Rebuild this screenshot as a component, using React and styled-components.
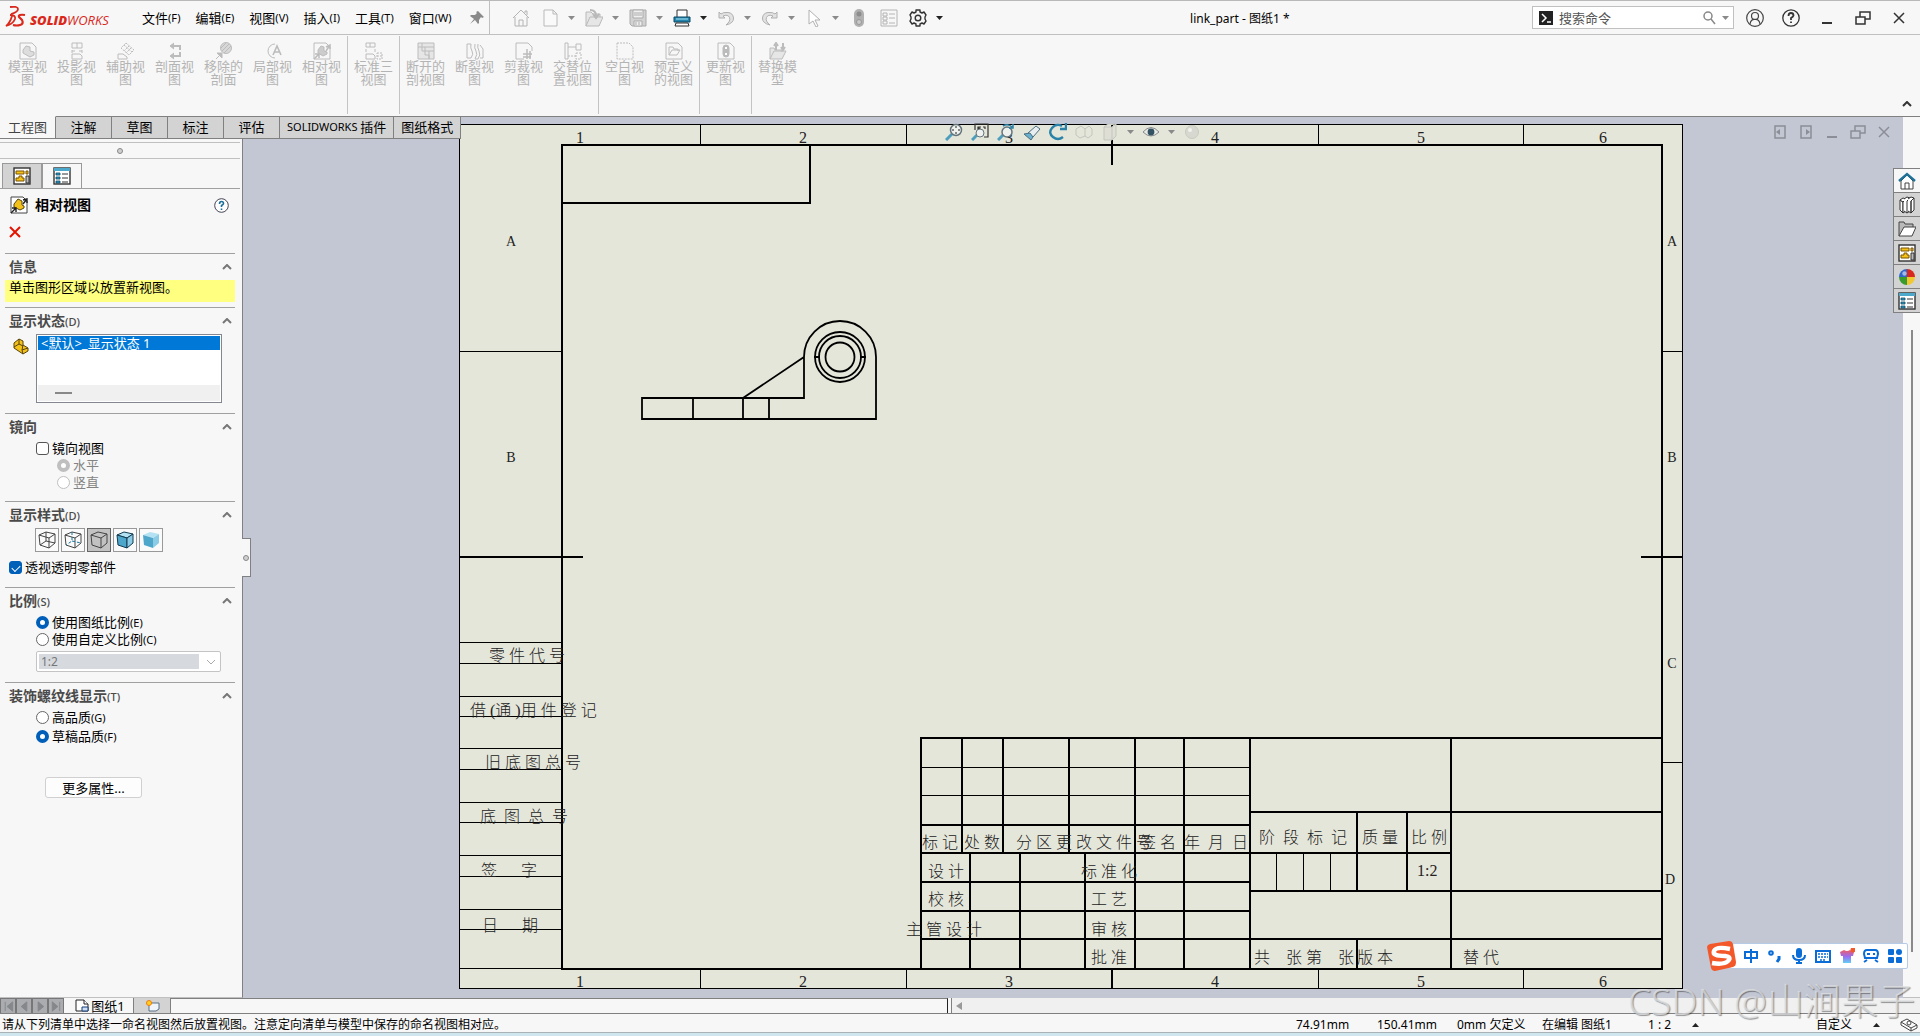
import React, { useState } from "react";
import styled, { createGlobalStyle, css } from "styled-components";

const menus = [
  ["文件", "F"],
  ["编辑", "E"],
  ["视图", "V"],
  ["插入", "I"],
  ["工具", "T"],
  ["窗口", "W"],
];

const quickTools = [
  { icon: "home", label: "欢迎" },
  { icon: "newDoc", label: "新建", split: true },
  { icon: "open", label: "打开", split: true },
  { icon: "save", label: "保存", split: true },
  { icon: "print", label: "打印", split: true, active: true },
  { icon: "undo", label: "撤消", split: true },
  { icon: "redo", label: "重做", split: true },
  { icon: "cursor", label: "选择", split: true },
  { icon: "light", label: "重建模型" },
  { icon: "list", label: "文件属性" },
  { icon: "gear", label: "选项", split: true, active: true },
];

const ribbonGroups = [
  [
    ["模型视", "图", "rModel"],
    ["投影视", "图", "rProject"],
    ["辅助视", "图", "rAux"],
    ["剖面视", "图", "rSection"],
    ["移除的", "剖面", "rRemoved"],
    ["局部视", "图", "rDetail"],
    ["相对视", "图", "rRelative"],
  ],
  [["标准三", "视图", "rThree"]],
  [
    ["断开的", "剖视图", "rBroken"],
    ["断裂视", "图", "rBreak"],
    ["剪裁视", "图", "rCrop"],
    ["交替位", "置视图", "rAlt"],
  ],
  [
    ["空白视", "图", "rEmpty"],
    ["预定义", "的视图", "rPredef"],
  ],
  [["更新视", "图", "rUpdate"]],
  [["替换模", "型", "rReplace"]],
];

const commandTabs = [
  ["", "工程图"],
  ["", "注解"],
  ["", "草图"],
  ["", "标注"],
  ["", "评估"],
  ["SOLIDWORKS", " 插件"],
  ["", "图纸格式"],
];

const cubeStyles = ["wire", "hidden", "removed", "edges", "shaded"];

const sheetTexts = [
  // left margin column
  [489, 661, "零 件 代 号"],
  [470, 716, "借 (通 )用 件 登 记"],
  [485, 768, "旧 底 图 总 号"],
  [480, 822, "底  图  总  号"],
  [481, 876, "签      字"],
  [482, 931, "日      期"],
  // title block
  [922, 848, "标 记"],
  [964, 848, "处 数"],
  [1016, 848, "分 区 更 改 文 件 号"],
  [1140, 848, "签 名"],
  [1184, 848, "年  月  日"],
  [1259, 843, "阶  段  标  记"],
  [1362, 843, "质 量"],
  [1411, 843, "比 例"],
  [1417, 876, "1:2"],
  [928, 877, "设 计"],
  [928, 905, "校 核"],
  [906, 935, "主 管 设 计"],
  [1081, 877, "标 准 化"],
  [1091, 905, "工 艺"],
  [1091, 935, "审 核"],
  [1091, 963, "批 准"],
  [1254, 963, "共    张 第    张"],
  [1357, 963, "版 本"],
  [1463, 963, "替 代"],
];

const zoneTexts = [
  [580, "1"],
  [803, "2"],
  [1009, "3"],
  [1215, "4"],
  [1421, "5"],
  [1603, "6"],
];

const zoneLetters = [
  [511, 246, "A"],
  [511, 462, "B"],
  [1672, 246, "A"],
  [1672, 462, "B"],
  [1672, 668, "C"],
  [1670, 884, "D"],
];

const Part = () => (
  <g stroke="#5a430a" strokeWidth="1" strokeLinejoin="round">
    <path d="M1 6l5-4 4 2v4l5 3v3l-5 3-9-6z" fill="#f2c21a" />
    <path d="M6 2v5l-5 3M6 7l4 2M10 8l-1 5 6-2M9 13l1 4" fill="none" />
  </g>
);

const Cube = ({ kind }) => {
  if (kind === "shaded" || kind === "edges") {
    const line = kind === "edges" ? "#123a50" : "none";
    return (
      <g stroke={line} strokeLinejoin="round">
        <path d="M1 4l7-3 9 2-6 4z" fill="#b5e2f3" />
        <path d="M1 4l10 3v10L2 14z" fill="#4fa6cb" />
        <path d="M11 7l6-4v9l-6 5z" fill="#8ccbe6" />
      </g>
    );
  }
  return (
    <g fill="none" stroke="#444" strokeLinejoin="round">
      <path d="M1 4l7-3 9 2-6 4zM1 4l1 10 9 3 6-5V3M11 7v10" />
      {kind === "wire" && <path d="M8 1v9l-6 4M8 10l9 2" />}
      {kind === "hidden" && (
        <path d="M8 1v9l-6 4M8 10l9 2" stroke="#17759d" strokeDasharray="3 2" />
      )}
    </g>
  );
};

// every drawing sits on an 18 x 18 grid
const shapes = {
  home: (
    <path d="M1 9l8-8 8 8M3 8v9h12V8M7 17v-6h4v6M13 4V2h2v4" fill="none" stroke="#b4b4b4" />
  ),
  newDoc: <path d="M3 1h9l4 4v12H3zM12 1v4h4" fill="#fafafa" stroke="#b9b9b9" />,
  open: (
    <g stroke="#b9b9b9" fill="#e6e6e6">
      <path d="M1 17V3h5l2 2h7v4" />
      <path d="M1 17l4-9h13l-4 9z" />
      <path d="M5 1q6 0 6 6M8 5l3 4 3-4" fill="none" strokeWidth="2" />
    </g>
  ),
  save: (
    <g fill="#d2d2d2" stroke="#ababab">
      <path d="M1 1h16v16H3l-2-2z" />
      <path d="M4 1h10v8H4zM5 12h8v5H5z" fill="#f0f0f0" />
      <path d="M5 4h8M5 6h8M7 13v3M10 13v3" />
    </g>
  ),
  print: (
    <g stroke="#333">
      <path d="M4 1h10v8H4z" fill="#fff" />
      <path d="M1 8h16v5H1z" fill="#2687ae" stroke="#0c4763" />
      <path d="M3 14h12l1 3H2z" fill="#fff" />
      <path d="M3 10h12" stroke="#a9e4f7" />
    </g>
  ),
  undo: (
    <path d="M2 3v6h6L6 7q5-2 6.500 1.500T9 16q8-2 7.500-7T11 3.500 4 5z" fill="#e2e2e2" stroke="#b0b0b0" />
  ),
  redo: (
    <path d="M16 3v6h-6l2-2Q7 5 5.500 8.500T9 16q-8-2-7.500-7T7 3.500 14 5z" fill="#e2e2e2" stroke="#b0b0b0" />
  ),
  cursor: <path d="M4 1v14l4-3 3 6 2-1-3-6h5z" fill="#fff" stroke="#b0b0b0" />,
  light: (
    <g>
      <rect x="4" y="0" width="10" height="18" rx="5" fill="#b0b0b0" />
      <circle cx="9" cy="5" r="2.500" fill="#8d8d8d" />
      <circle cx="9" cy="13" r="2.500" fill="#c9c9c9" stroke="#989898" />
    </g>
  ),
  list: (
    <g fill="none" stroke="#b4b4b4">
      <path d="M1 1h16v16H1zM3 4h4v3H3zM3 8h4v3H3zM3 12h4v3H3zM9 5h6M9 9h6M9 14h6" />
    </g>
  ),
  gear: (
    <g fill="none" stroke="#333" strokeWidth="1.400">
      <path d="M7 1h4v2l2 1 2-1 2 3-1 2v2l1 2-2 3-2-1-2 1v2H7v-2l-2-1-2 1-2-3 1-2V8L1 6l2-3 2 1 2-1z" strokeLinejoin="round" />
      <circle cx="9" cy="9" r="2.800" />
    </g>
  ),
  rModel: (
    <g>
      <path d="M1 1h12l4 4v12H1z" />
      <path d="M4 8l3-4 4 1v4l4 1v3l-4 2-7-4z" fill="#ddd" />
    </g>
  ),
  rProject: (
    <path d="M4 1h10v5H4zM9 1v5M4 8v3M14 8v3M4 9h3M11 9h3M4 12h8l2 2v3H4z" />
  ),
  rAux: (
    <g>
      <path d="M9 1l8 7-5 5-8-7zM7 3l8 7M12 4L7 9M14 6l-5 5" strokeDasharray="2 1" />
      <path d="M1 12h5l4 3v2H1z" />
    </g>
  ),
  rSection: (
    <g strokeWidth="2">
      <path d="M8 1L4 4l4 3M8 11l-4 3 4 3" fill="#bcbcbc" strokeWidth="1" />
      <path d="M5 4h9v4M14 10v4H5" />
    </g>
  ),
  rRemoved: (
    <g>
      <circle cx="11" cy="6" r="5.500" fill="#d8d8d8" />
      <path d="M7 9l7-7M9 11l7-7M6 6l5-5" />
      <path d="M1 17l5-5M2 11h5v5z" fill="#bcbcbc" />
    </g>
  ),
  rDetail: (
    <g>
      <path d="M11 2a7 7 0 1 0 0 14" />
      <path d="M9 13l4-9 4 9M10 10h6" strokeWidth="1.600" />
    </g>
  ),
  rRelative: (
    <g>
      <path d="M1 1h12l4 4v12H1z" />
      <path d="M5 8l3-4 3 1v4l3 1v2l-4 2-5-3z" fill="#ccc" />
      <path d="M1 17l5-5M2 12h4v4M13 9l4-6M13 5l4-2v4" strokeWidth="1.500" />
    </g>
  ),
  rThree: (
    <g>
      <path d="M1 1h9v4H1zM5 1v4M1 7v3M10 7v3M1 12h7l2 2v3H1z" />
      <path d="M12 11h5v6h-5zM12 14h5" strokeDasharray="2 1" />
    </g>
  ),
  rBroken: (
    <g>
      <path d="M1 1h16v16H1z" fill="#e6e6e6" />
      <path d="M1 5h4v4h3v4h4v4M5 1v4h12M8 5v4h9M12 9v8" />
    </g>
  ),
  rBreak: (
    <path d="M5 2H1v14h4q3-4 1-7t-1-7M9 2q-1 4 1 7t-1 8h3q3-4 1-8t-1-7M14 3l3 4v9h-3" />
  ),
  rCrop: (
    <g>
      <path d="M1 1h12l4 4v4M1 1v16h8" />
      <path d="M8 12h9M12 7v10M15 9v8M8 15h8" strokeWidth="1.500" />
    </g>
  ),
  rAlt: (
    <g>
      <path d="M1 1h3v16H1zM4 5h8M12 2h5v6h-5z" />
      <path d="M4 14h8M12 11h5v6h-5z" strokeDasharray="2 1" />
    </g>
  ),
  rEmpty: <path d="M1 1h12l4 4v12H1z" strokeDasharray="2 1" />,
  rPredef: (
    <g>
      <path d="M1 1h12l4 4v12H1z" />
      <path d="M4 13V5h4l1 2h4v2M4 13l3-5h8l-3 5z" />
    </g>
  ),
  rUpdate: (
    <g>
      <path d="M1 1h12l4 4v12H1z" />
      <rect x="6" y="3" width="6" height="12" rx="3" fill="#bbb" />
      <path d="M8 6h2M8 12h2" stroke="#fff" strokeWidth="2" />
    </g>
  ),
  rReplace: (
    <g>
      <path d="M1 17V6h4l1 2h7v2M1 17l4-8h12l-4 8z" fill="#e6e6e6" />
      <path d="M7 8V3M5 4l2-3 2 3M14 1v7M12 5l2 3 2-3" strokeWidth="2" />
    </g>
  ),
  sheetFmt: (
    <g stroke="#333">
      <rect x="1" y="1" width="16" height="16" fill="#fff" strokeWidth="1.400" />
      <path d="M3 4h8v3H3zM13 4h2v3h-2zM3 14v-3h3V9h3v2h2v3z" fill="#f5c21a" stroke="#7a5300" />
      <path d="M13 9h3v7h-3z" fill="#bbb" />
    </g>
  ),
  props: (
    <g>
      <rect x="1" y="1" width="16" height="16" fill="#fff" stroke="#333" strokeWidth="1.400" />
      <path d="M1 1h16v3H1z" fill="#4da9cc" />
      <path d="M3 6h4v2H3zM3 10h4v2H3zM3 14h4v2H3z" fill="#3b9cc0" stroke="#0b4866" strokeWidth=".8" />
      <path d="M9 7h6M9 11h6M9 15h6" stroke="#333" />
    </g>
  ),
  relView: (
    <g>
      <path d="M1 1h12l4 4v12H1z" fill="#fff" stroke="#444" />
      <path d="M4 8l4-5 4 2v4l2 1v2l-4 2-6-3z" fill="#f2c21a" stroke="#5a430a" />
      <path d="M1 17l5-5M2 12h4v4M13 8l4-5M13 4l4-1v4" fill="none" stroke="#222" strokeWidth="1.400" />
    </g>
  ),
  part: <Part />,
  taskHome: (
    <g>
      <path d="M3 9v8h12V9L9 3z" fill="#fff" stroke="#444" />
      <path d="M7 17v-6h4v6" fill="none" stroke="#444" />
      <path d="M1 9l8-7 8 7" fill="none" stroke="#1f7197" strokeWidth="2.400" />
    </g>
  ),
  books: (
    <g fill="#fff" stroke="#333" strokeLinejoin="round">
      <path d="M2 4l3 2v11l-3-3z" />
      <path d="M2 4l3-2 3 1-3 3zM5 6l3-3v12l-3 2z" />
      <path d="M6 3l3-2 3 1-3 3v12l-3-2M9 5l3-3v13l-3 2" />
      <path d="M10 3l3-2 3 1-3 3v12l-3-2M13 5l3-3v12l-3 3z" />
    </g>
  ),
  folder: (
    <g stroke="#444">
      <path d="M1 16V2h5l1 2h8v3" fill="#b9b9b9" />
      <path d="M1 16L6 7h12l-4 9z" fill="#fff" />
    </g>
  ),
  ball: (
    <g>
      <path d="M9 9V1a8 8 0 0 1 8 8z" fill="#d8271c" />
      <path d="M9 9h8a8 8 0 0 1-8 8z" fill="#f2c832" />
      <path d="M9 9v8a8 8 0 0 1-8-8z" fill="#3a9a2e" />
      <path d="M9 9H1a8 8 0 0 1 8-8z" fill="#2f66c9" />
      <circle cx="6.500" cy="5.500" r="2.200" fill="#fff" opacity=".55" />
    </g>
  ),
  zoomFit: (
    <g>
      <path d="M1 17l6-6" stroke="#4d9dbd" strokeWidth="3" />
      <circle cx="11" cy="7" r="5.500" fill="#eef1ee" stroke="#66757c" strokeWidth="1.500" />
      <path d="M11 3v2M11 9v2M7 7h2M13 7h2" stroke="#222" />
    </g>
  ),
  zoomArea: (
    <g>
      <path d="M4 7V1h13v13h-4M7 4l3 3M7 7V4h3M12 4h2v2" fill="none" stroke="#333" strokeWidth="1.200" />
      <path d="M1 17l5-5" stroke="#4d9dbd" strokeWidth="3" />
      <circle cx="9" cy="10" r="4" fill="#eef1ee" stroke="#66757c" />
    </g>
  ),
  zoomPrev: (
    <g>
      <path d="M1 17l6-6" stroke="#4d9dbd" strokeWidth="3" />
      <circle cx="10" cy="9" r="5" fill="#eef1ee" stroke="#66757c" strokeWidth="1.500" />
      <path d="M6 3q5-3 9 1M16 1v4h-4" fill="none" stroke="#2b7fa3" strokeWidth="1.500" />
    </g>
  ),
  pen: (
    <g stroke="#4b6f80">
      <path d="M5 10l8-7 4 3-7 8z" fill="#e8eef0" />
      <path d="M1 11l6-1 3 4-2 3z" fill="#69b1cd" />
    </g>
  ),
  rotate: (
    <path d="M14 14q-5 4-10 0T3 5q4-5 10-2M11 6h6V0" fill="none" stroke="#2b82a8" strokeWidth="2.400" />
  ),
  ghost: (
    <g fill="none" stroke="#c3c5be">
      <path d="M1 6l5-3 4 3v7l-5 2-4-3zM10 6l4-3 3 3v6l-4 3-3-2" />
    </g>
  ),
  ghostBox: <path d="M3 4l4-3h8v12l-4 4H3zM3 4h8l4-3M11 4v13" fill="#deded4" stroke="#c3c5be" />,
  eye: (
    <g>
      <path d="M1 9q8-9 16 0-8 8-16 0z" fill="#e8eae6" stroke="#85898a" />
      <circle cx="9" cy="9" r="3.400" fill="#335261" />
    </g>
  ),
  ghostBall: (
    <g>
      <circle cx="9" cy="9" r="6.500" fill="#d7d8cf" stroke="#c9cac0" />
      <circle cx="7" cy="7" r="2" fill="#f3f3ee" />
    </g>
  ),
};

const Icon = ({ name }) => {
  const ribbon = /^r[A-Z]/.test(name);
  return (
    <svg
      width="18"
      height="18"
      viewBox="0 0 18 18"
      fill={ribbon ? "none" : undefined}
      stroke={ribbon ? "#bcbcbc" : undefined}
      aria-hidden="true"
    >
      {shapes[name]}
    </svg>
  );
};

const Caret = ({ up, dark }) => (
  <svg width="7" height="4" viewBox="0 0 7 4" aria-hidden="true">
    <path d={up ? "M0 4h7L3.500 0z" : "M0 0h7L3.500 4z"} fill={dark ? "#222" : "#8a8a8a"} />
  </svg>
);

const WindowGlyph = ({ kind }) => (
  <svg width="16" height="16" viewBox="0 0 16 16" fill="none" stroke="currentColor" strokeWidth="1.500" aria-hidden="true">
    {kind === "left" && (
      <g>
        <path d="M3 2h10v12H3z" />
        <path d="M8 5v6L4 8z" fill="currentColor" stroke="none" />
      </g>
    )}
    {kind === "right" && (
      <g>
        <path d="M3 2h10v12H3z" />
        <path d="M8 5v6l4-3z" fill="currentColor" stroke="none" />
      </g>
    )}
    {kind === "min" && <path d="M3 13h10" strokeWidth="2" />}
    {kind === "restore" && <path d="M1 7h9v7H1zM5 7V2h10v7h-5" />}
    {kind === "close" && <path d="M3 3l10 10M13 3L3 13" />}
  </svg>
);

const DrawingSheet = () => (
  <SheetSvg viewBox="243 117 1660 881" role="img" aria-label="图纸1">
    <rect x="459.500" y="124.500" width="1223" height="864" fill="#e5e6da" stroke="#000" shapeRendering="crispEdges" />
    <g fill="none" stroke="#000" shapeRendering="crispEdges">
      {/* zone ticks and margin table */}
      <path d="M700.500 124v20M906.500 124v20M1318.500 124v20M1523.500 124v20M700.500 970v19M906.500 970v19M1318.500 970v19M1523.500 970v19" />
      <path d="M459 351.500h102M1662 351.500h20M1662 762.500h20" />
      <path d="M459 642.500h102M459 663.500h102M459 696.500h102M459 716.500h102M459 748.500h102M459 769.500h102M459 802.500h102M459 822.500h102M459 855.500h102M459 876.500h102M459 909.500h102M459 929.500h102M459 968.500h102" />
      <path d="M921 767.500h329M921 795.500h329M1276.500 853v38M1303.500 853v38M1330.500 853v38" />
      <g strokeWidth="2">
        <path d="M562 145h1100v824H562zM562 203h248V145M1112 124v41M1112 969v20M459 557h124M1641 557h41" />
        <path d="M921 969V738h741M921 825h329M921 853h530M921 882h329M921 911h329M921 939h741M1250 812h412M1250 891h412" />
        <path d="M962 738v115M1003 738v115M1069 738v115M1135 738v231M1184 738v231M1250 738v231M1451 738v231" />
        <path d="M970 853v116M1020 853v116M1085 853v116M1357 812v79M1357 939v30M1407 812v79" />
      </g>
    </g>
    {/* projected part */}
    <g fill="none" stroke="#000" strokeWidth="1.800">
      <path d="M804 398H642v21h234v-62a36 36 0 0 0-72 0zM693 398v21M743 398v21M769 398v21M743 398l61-41" />
      <circle cx="840" cy="357" r="25" />
      <circle cx="840" cy="357" r="21" />
      <circle cx="840" cy="357" r="14.500" />
      <path d="M814 357h6M860 357h6" />
    </g>
    {zoneTexts.map(([x, t]) => (
      <React.Fragment key={t}>
        <text x={x} y="143" textAnchor="middle">{t}</text>
        <text x={x} y="987" textAnchor="middle">{t}</text>
      </React.Fragment>
    ))}
    {zoneLetters.map(([x, y, t]) => (
      <text key={x + "-" + y} className="zone" x={x} y={y} textAnchor="middle">{t}</text>
    ))}
    {sheetTexts.map(([x, y, t]) => (
      <text key={x + "-" + y} x={x} y={y}>{t}</text>
    ))}
  </SheetSvg>
);

const Section = ({ title, hotkey, children }) => (
  <SectionBox>
    <SectionHead>
      <h3>
        {title}
        {hotkey && <Key>({hotkey})</Key>}
      </h3>
      <PlainButton aria-label={"折叠 " + title}>
        <svg width="10" height="6" viewBox="0 0 10 6" fill="none" stroke="#777" strokeWidth="2">
          <path d="M1 5l4-4 4 4" />
        </svg>
      </PlainButton>
    </SectionHead>
    {children}
  </SectionBox>
);

export default function App() {
  const [mirror, setMirror] = useState(false);
  const [seeThrough, setSeeThrough] = useState(true);
  const [scale, setScale] = useState("sheet");
  const [quality, setQuality] = useState("draft");
  const [cube, setCube] = useState("removed");

  return (
    <AppWindow>
      <GlobalStyle />
      <TitleBar>
        <Logo>
          <svg width="21" height="22" viewBox="0 0 21 22" fill="none" stroke="#da291c" strokeWidth="1.800" aria-hidden="true">
            <path d="M5 1q8-1 8 2T6 8" />
            <path d="M5 9q6 0 5 4-2 5-9 7 4-3 6-10" />
            <path d="M20 9q-7-1-6 2 1 1 3 3 2 4-2 5-3 1-7 0" strokeWidth="2.200" />
          </svg>
          <span>
            <b>SOLID</b>WORKS
          </span>
        </Logo>
        <MenuBar>
          {menus.map(([name, key]) => (
            <PlainButton key={name}>
              {name}
              <Key>({key})</Key>
            </PlainButton>
          ))}
        </MenuBar>
        <PinButton aria-label="固定菜单">
          <svg width="14" height="14" viewBox="0 0 14 14" fill="#8a8a8a">
            <path d="M8 0l6 6-2 1-1-1-2 3v3l-1 1-3-4-5 4 4-5-4-3 1-1h4l2-2-1-1z" />
          </svg>
        </PinButton>
        <QuickBar>
          {quickTools.map((t) => (
            <React.Fragment key={t.icon}>
              <ToolButton $split={t.split} aria-label={t.label}>
                <Icon name={t.icon} />
              </ToolButton>
              {t.split && (
                <CaretButton aria-label={t.label + "选项"}>
                  <Caret dark={t.active} />
                </CaretButton>
              )}
            </React.Fragment>
          ))}
        </QuickBar>
        <DocTitle>link_part - 图纸1 *</DocTitle>
        <SearchBox>
          <svg width="14" height="14" viewBox="0 0 14 14" fill="none" stroke="#fff" aria-hidden="true">
            <rect width="14" height="14" fill="#222" stroke="none" />
            <path d="M3 3l4 4-4 4M8 11h4" strokeWidth="1.500" />
          </svg>
          <input aria-label="搜索命令" placeholder="搜索命令" />
          <svg width="14" height="14" viewBox="0 0 14 14" fill="none" stroke="#888" strokeWidth="1.500" aria-hidden="true">
            <circle cx="6" cy="5" r="4" />
            <path d="M9 8l4 5" />
          </svg>
          <Caret />
        </SearchBox>
        <WindowTools>
          <PlainButton aria-label="登录">
            <svg width="18" height="18" viewBox="0 0 18 18" fill="none" stroke="#444" strokeWidth="1.200">
              <circle cx="9" cy="9" r="8.300" />
              <circle cx="9" cy="7" r="3.500" />
              <path d="M4 15q1-5 5-4.500 4-.5 5 4.500" />
            </svg>
          </PlainButton>
          <PlainButton aria-label="帮助">
            <svg width="18" height="18" viewBox="0 0 18 18" fill="none" stroke="#333" strokeWidth="1.300">
              <circle cx="9" cy="9" r="8.200" />
              <path d="M6.500 7q0-3 2.500-3t2.500 2.500Q11 8 9 9v2M9 12.500v1.500" strokeWidth="1.800" />
            </svg>
          </PlainButton>
          {["min", "restore", "close"].map((k) => (
            <PlainButton key={k} aria-label={k}>
              <WindowGlyph kind={k} />
            </PlainButton>
          ))}
        </WindowTools>
      </TitleBar>

      <Ribbon>
        {ribbonGroups.map((group, i) => (
          <RibbonGroup key={i}>
            {group.map(([a, b, icon]) => (
              <RibbonButton key={icon} disabled>
                <Icon name={icon} />
                <span>{a}</span>
                <span>{b}</span>
              </RibbonButton>
            ))}
          </RibbonGroup>
        ))}
        <CollapseButton aria-label="折叠功能区">
          <svg width="10" height="6" viewBox="0 0 10 6" fill="none" stroke="#333" strokeWidth="2">
            <path d="M1 5l4-4 4 4" />
          </svg>
        </CollapseButton>
      </Ribbon>

      <Workspace>
        <CommandTabs role="tablist">
          {commandTabs.map(([latin, t], i) => (
            <CommandTab key={t} role="tab" aria-selected={i === 0} $active={i === 0}>
              {latin && <Key>{latin}&nbsp;</Key>}
              {t}
            </CommandTab>
          ))}
        </CommandTabs>

        <Panel>
          <PanelGrip>
            <Dot />
          </PanelGrip>
          <PanelTabs>
            <PanelTab aria-label="图纸">
              <Icon name="sheetFmt" />
            </PanelTab>
            <PanelTab $active aria-label="属性">
              <Icon name="props" />
            </PanelTab>
          </PanelTabs>
          <PanelHead>
            <Icon name="relView" />
            <h2>相对视图</h2>
            <PlainButton aria-label="帮助">
              <svg width="15" height="15" viewBox="0 0 15 15" fill="none" stroke="#445">
                <circle cx="7.500" cy="7.500" r="6.800" fill="#fff" />
                <path d="M5.500 6q0-2.500 2-2.500t2 2q0 1-2 2v1.500M7.500 10.500V12" stroke="#1c7098" strokeWidth="1.600" />
              </svg>
            </PlainButton>
          </PanelHead>
          <CancelRow>
            <PlainButton aria-label="取消">
              <svg width="12" height="12" viewBox="0 0 12 12" stroke="#e51400" strokeWidth="2">
                <path d="M1 1l10 10M11 1L1 11" />
              </svg>
            </PlainButton>
          </CancelRow>

          <Section title="信息">
            <Message>单击图形区域以放置新视图。</Message>
          </Section>
          <Section title="显示状态" hotkey="D">
            <StateRow>
              <Icon name="part" />
              <StateList role="listbox" aria-label="显示状态">
                <li role="option" aria-selected="true">&lt;默认&gt;_显示状态 1</li>
                <ListScroll />
              </StateList>
            </StateRow>
          </Section>
          <Section title="镜向">
            <Option $level={1}>
              <Check type="checkbox" checked={mirror} onChange={() => setMirror(!mirror)} />
              镜向视图
            </Option>
            <Option $level={2} $disabled>
              <Radio type="radio" name="mirror" defaultChecked disabled />
              水平
            </Option>
            <Option $level={2} $disabled>
              <Radio type="radio" name="mirror" disabled />
              竖直
            </Option>
          </Section>
          <Section title="显示样式" hotkey="D">
            <CubeRow>
              {cubeStyles.map((k) => (
                <CubeButton key={k} aria-label={k} $on={cube === k} onClick={() => setCube(k)}>
                  <svg width="18" height="18" viewBox="0 0 18 18">
                    <Cube kind={k} />
                  </svg>
                </CubeButton>
              ))}
            </CubeRow>
            <Option $tall>
              <Check type="checkbox" checked={seeThrough} onChange={() => setSeeThrough(!seeThrough)} />
              透视透明零部件
            </Option>
          </Section>
          <Section title="比例" hotkey="S">
            <Option $level={1}>
              <Radio type="radio" name="scale" checked={scale === "sheet"} onChange={() => setScale("sheet")} />
              使用图纸比例<Key>(E)</Key>
            </Option>
            <Option $level={1}>
              <Radio type="radio" name="scale" checked={scale === "custom"} onChange={() => setScale("custom")} />
              使用自定义比例<Key>(C)</Key>
            </Option>
            <ScaleBox>
              <select aria-label="自定义比例" disabled={scale === "sheet"}>
                <option>1:2</option>
              </select>
              <svg width="10" height="6" viewBox="0 0 10 6" fill="none" stroke="#aaa" aria-hidden="true">
                <path d="M1 1l4 4 4-4" />
              </svg>
            </ScaleBox>
          </Section>
          <Section title="装饰螺纹线显示" hotkey="T">
            <Option $level={1}>
              <Radio type="radio" name="quality" checked={quality === "high"} onChange={() => setQuality("high")} />
              高品质<Key>(G)</Key>
            </Option>
            <Option $level={1} $tall>
              <Radio type="radio" name="quality" checked={quality === "draft"} onChange={() => setQuality("draft")} />
              草稿品质<Key>(F)</Key>
            </Option>
          </Section>
          <MoreButton>更多属性...</MoreButton>
        </Panel>

        <Canvas>
          <DrawingSheet />
          <PanelHandle aria-label="隐藏面板">
            <Dot />
          </PanelHandle>
          <HeadsUp>
            {["zoomFit", "zoomArea", "zoomPrev", "pen", "rotate", "ghost", "ghostBox"].map((n) => (
              <PlainButton key={n} aria-label={n}>
                <Icon name={n} />
              </PlainButton>
            ))}
            <Caret />
            <PlainButton aria-label="eye">
              <Icon name="eye" />
            </PlainButton>
            <Caret />
            <PlainButton aria-label="scene">
              <Icon name="ghostBall" />
            </PlainButton>
          </HeadsUp>
          <DocButtons>
            {["left", "right", "min", "restore", "close"].map((k) => (
              <PlainButton key={k} aria-label={k}>
                <WindowGlyph kind={k} />
              </PlainButton>
            ))}
          </DocButtons>
        </Canvas>
        <RightRail>
          <RailThumb />
        </RightRail>
        <TaskPane>
          {["taskHome", "books", "folder", "sheetFmt", "ball", "props"].map((n, i) => (
            <TaskButton key={n} $active={i === 0} aria-label={n}>
              <Icon name={n} />
            </TaskButton>
          ))}
        </TaskPane>
      </Workspace>

      <SheetBar>
        {["M4 2v10M12 2L6 7l6 5z", "M10 2L4 7l6 5z", "M5 2l6 5-6 5z", "M11 2v10M3 2l6 5-6 5z"].map((d) => (
          <NavButton key={d} disabled aria-label="nav">
            <svg width="14" height="13" viewBox="0 0 14 14" fill="#85878a" stroke="#85878a">
              <path d={d} />
            </svg>
          </NavButton>
        ))}
        <SheetTab $active>
          <svg width="14" height="13" viewBox="0 0 14 13" fill="#fff" stroke="#222">
            <path d="M1 1h8l4 4v7H1z" />
            <path d="M7 8h6v4H7z" fill="#cfe0f5" stroke="#143c78" />
            <path d="M9 1v4h4" />
          </svg>
          图纸1
        </SheetTab>
        <SheetTab aria-label="添加图纸">
          <svg width="15" height="13" viewBox="0 0 15 13" fill="#eef4fa" stroke="#5a6f86">
            <path d="M4 4h10v6l-3 2H4z" />
            <circle cx="4" cy="4" r="2.500" fill="#ffd21c" stroke="#f07a12" />
          </svg>
        </SheetTab>
        <SheetFill />
        <HScroll>
          <svg width="6" height="8" viewBox="0 0 6 8" fill="#9a9a9a" aria-hidden="true">
            <path d="M6 0v8L0 4z" />
          </svg>
        </HScroll>
      </SheetBar>

      <StatusBar>
        <Hint>请从下列清单中选择一命名视图然后放置视图。注意定向清单与模型中保存的命名视图相对应。</Hint>
        <Status $w={81}>74.91mm</Status>
        <Status $w={80}>150.41mm</Status>
        <Status $w={85}>0mm 欠定义</Status>
        <Status $w={106}>在编辑 图纸1</Status>
        <Status $w={168}>
          1 : 2 <Caret up dark />
        </Status>
        <Status $w={84}>
          自定义 <Caret up dark />
        </Status>
        <svg width="18" height="14" viewBox="0 0 18 14" fill="#fff" stroke="#444" aria-hidden="true">
          <path d="M1 4l6-3 10 6v3l-6 3L1 7zM1 4l10 6 6-3M11 10v3" />
          <circle cx="9" cy="5" r="2" />
        </svg>
      </StatusBar>
      <Taskbar />

      <Ime>
        <ImeLogo width="32" height="32" viewBox="0 0 32 32" aria-hidden="true">
          <path d="M2 7q0-2 3-3l19-3q3 0 4 3l3 18q0 4-3 5l-18 4q-3 0-4-3z" fill="#f3582a" />
          <path d="M25 9Q11 6 9 11t11 5q7 1 3 5T7 23" fill="none" stroke="#fff" strokeWidth="4.500" />
        </ImeLogo>
        <ImeTools>
          <svg viewBox="0 0 16 16" fill="none" stroke="#0a6cd6" strokeWidth="2">
            <path d="M2 4h12v6H2zM8 1v14" />
          </svg>
          <svg viewBox="0 0 16 16" fill="none" stroke="#0a6cd6" strokeWidth="2">
            <circle cx="4" cy="5" r="1.800" />
            <path d="M12 8v3l-2 3" strokeWidth="3" />
          </svg>
          <svg viewBox="0 0 16 16" fill="none" stroke="#0a6cd6" strokeWidth="2">
            <rect x="6" y="1" width="4" height="8" rx="2" fill="#0a6cd6" />
            <path d="M2 7q0 5 6 5t6-5M8 12v4M5 15h6" />
          </svg>
          <svg viewBox="0 0 16 16" fill="none" stroke="#0a6cd6" strokeWidth="2">
            <path d="M1 3h14v11H1z" />
            <path d="M3 6h10M3 9h10M5 12h6" strokeDasharray="2 1" strokeWidth="1.500" />
          </svg>
          <svg viewBox="0 0 16 16">
            <defs>
              <linearGradient id="shirt" x2="0" y2="1">
                <stop stopColor="#ef5c66" />
                <stop offset=".5" stopColor="#9a6cf0" />
                <stop offset="1" stopColor="#5fd0f5" />
              </linearGradient>
            </defs>
            <path d="M1 4l4-2q3 2 6 0l4 2-1 4h-2v7H4V8H2z" fill="url(#shirt)" />
            <circle cx="14" cy="2" r="2.500" fill="#f3582a" />
          </svg>
          <svg viewBox="0 0 16 16" fill="none" stroke="#0a6cd6" strokeWidth="2">
            <path d="M4 2h8q3 0 3 4l-1 4H2L1 6q0-4 3-4zM4 6h3M10 6h2M4 12l-3 2M12 12l3 2" />
          </svg>
          <svg viewBox="0 0 16 16" fill="#0a6cd6">
            <rect x="1" y="1" width="6" height="6" rx="1" />
            <rect x="9" y="1" width="6" height="6" rx="3" />
            <rect x="1" y="9" width="6" height="6" rx="1" />
            <rect x="9" y="9" width="6" height="6" rx="1" />
          </svg>
        </ImeTools>
      </Ime>
      <Watermark>CSDN @山涧果子</Watermark>
    </AppWindow>
  );
}

const GlobalStyle = createGlobalStyle`
  * {
    box-sizing: border-box;
  }

  body {
    margin: 0;
    font-family: "Noto Sans", "Noto Sans CJK SC", sans-serif;
    font-size: 13px;
    color: #000;
  }

  button, input, select {
    font: inherit;
    color: inherit;
    margin: 0;
  }

  svg {
    display: block;
    flex: none;
  }
`;

const AppWindow = styled.div`
  position: relative;
  display: flex;
  flex-direction: column;
  height: 100vh;
  overflow: hidden;
  background: #f7f7f7;
`;

const PlainButton = styled.button`
  display: flex;
  align-items: center;
  justify-content: center;
  padding: 0;
  border: 0;
  background: none;
  white-space: nowrap;
`;

const Key = styled.span`
  font-size: 11px;
`;

const TitleBar = styled.header`
  display: flex;
  align-items: center;
  flex: none;
  height: 35px;
  border-top: 1px solid #b9b9b9;
  border-bottom: 1px solid #c0c0c0;
`;

const Logo = styled.div`
  display: flex;
  align-items: center;
  gap: 4px;
  width: 142px;
  padding-left: 5px;
  padding-bottom: 2px;
  font: italic 13px/18px "Open Sans", sans-serif;
  color: #da291c;

  span {
    padding-top: 6px;
  }

  b {
    font-weight: 800;
  }
`;

const MenuBar = styled.nav`
  display: flex;
  gap: 15px;
`;

const PinButton = styled(PlainButton)`
  width: 25px;
  height: 34px;
  margin-left: 13px;
  border-right: 1px solid #c0c0c0;
`;

const QuickBar = styled.div`
  display: flex;
  align-items: center;
  padding-left: 16px;
`;

const ToolButton = styled(PlainButton)`
  width: ${(p) => (p.$split ? 28 : 30)}px;
  height: 24px;
`;

const CaretButton = styled(PlainButton)`
  width: 16px;
  height: 24px;
`;

const DocTitle = styled.div`
  flex: 1;
  text-align: center;
  font-size: 12px;
`;

const SearchBox = styled.label`
  display: flex;
  align-items: center;
  gap: 6px;
  width: 202px;
  height: 23px;
  padding: 0 4px 0 6px;
  border: 1px solid #c0c0c0;
  background: #fff;

  input {
    flex: 1;
    min-width: 0;
    padding: 0;
    border: 0;
    outline: none;
    background: none;
  }

  input::placeholder {
    color: #555;
  }
`;

const WindowTools = styled.div`
  display: flex;
  padding: 0 3px;
  color: #333;

  button {
    width: 36px;
    height: 24px;
  }
`;

const Ribbon = styled.div`
  display: flex;
  flex: none;
  height: 82px;
  padding: 1px 8px 2px 2px;
  border-bottom: 1px solid #808080;
`;

const RibbonGroup = styled.div`
  display: flex;
  padding: 0 1px;
  border-right: 1px solid #c4c4c4;

  &:nth-last-child(2) {
    border-right: 0;
  }
`;

const RibbonButton = styled(PlainButton)`
  flex-direction: column;
  justify-content: flex-start;
  width: 49px;
  padding-top: 6px;
  line-height: 13px;
  color: #b4b4b4;
`;

const CollapseButton = styled(PlainButton)`
  align-self: flex-end;
  height: 20px;
  margin-left: auto;
`;

const Workspace = styled.main`
  position: relative;
  display: flex;
  flex: 1;
  min-height: 0;
`;

const CommandTabs = styled.div`
  position: absolute;
  top: -1px;
  left: 0;
  z-index: 2;
  display: flex;
  border-bottom: 1px solid #808080;
`;

const CommandTab = styled(PlainButton)`
  min-width: 56px;
  height: 22px;
  padding: 0 7px 2px;
  border-top: 1px solid #808080;
  border-right: 1px solid #808080;
  background: #d3d3d3;

  ${(p) =>
    p.$active &&
    css`
      border-top-color: #f7f7f7;
      background: #f7f7f7;
      color: #444;
    `}
`;

const Panel = styled.aside`
  flex: none;
  width: 243px;
  padding: 25px 2px 0 0;
  border-right: 1px solid #808080;
  border-bottom: 1px solid #c0c0c0;
  overflow: hidden;
`;

const PanelGrip = styled.div`
  display: flex;
  align-items: center;
  justify-content: center;
  height: 17px;
  border-top: 1px solid #c0c0c0;
  border-bottom: 1px solid #c0c0c0;
`;

const Dot = styled.span`
  width: 6px;
  height: 6px;
  border: 1px solid #888;
  border-radius: 50%;
  background: #d0d0d0;
`;

const PanelTabs = styled.div`
  display: flex;
  padding: 4px 0 0 2px;
  border-bottom: 1px solid #a0a0a0;
`;

const PanelTab = styled(PlainButton)`
  width: 40px;
  height: 25px;
  border: 1px solid #999;
  border-bottom: 0;
  background: ${(p) => (p.$active ? "#f7f7f7" : "#d3d3d3")};
  margin-bottom: ${(p) => (p.$active ? "-1px" : "0")};
`;

const PanelHead = styled.div`
  display: flex;
  align-items: center;
  gap: 7px;
  height: 32px;
  padding: 0 11px 0 10px;

  h2 {
    flex: 1;
    margin: 0;
    font-size: 14px;
    line-height: 20px;
  }
`;

const CancelRow = styled.div`
  height: 32px;
  padding: 5px 9px;
`;

const SectionBox = styled.section`
  margin: 0 5px;
  padding-bottom: 10px;
  border-top: 1px solid #a0a0a0;

  &:first-of-type {
    padding-bottom: 5px;
  }
`;

const SectionHead = styled.div`
  display: flex;
  align-items: center;
  justify-content: space-between;
  height: 26px;
  padding: 0 3px 0 4px;

  h3 {
    margin: 0;
    font-size: 14px;
    line-height: 20px;
    color: #4a4a4a;
  }

  ${Key} {
    font-weight: 500;
  }
`;

const Message = styled.p`
  height: 22px;
  margin: 0;
  padding: 0 4px;
  line-height: 14px;
  background: #ffff80;
`;

const StateRow = styled.div`
  display: flex;
  gap: 5px;
  padding: 0 13px 0 8px;

  > svg {
    margin-top: 3px;
  }
`;

const StateList = styled.ul`
  display: flex;
  flex: 1;
  flex-direction: column;
  justify-content: space-between;
  height: 69px;
  margin: 0;
  padding: 1px;
  border: 1px solid #828790;
  background: #fff;
  list-style: none;

  li:first-child {
    padding-left: 3px;
    line-height: 14px;
    background: #0078d7;
    color: #fff;
  }
`;

const ListScroll = styled.li`
  height: 16px;
  padding: 7px 0 0 17px;
  background: #f0f0f0;

  &::before {
    content: "";
    display: block;
    width: 17px;
    height: 2px;
    background: #888;
  }
`;

const Option = styled.label`
  display: flex;
  align-items: center;
  height: ${(p) => (p.$tall ? 20 : 17)}px;
  padding-left: ${(p) => [4, 31, 52][p.$level || 0]}px;
  line-height: 17px;
  color: ${(p) => (p.$disabled ? "#838383" : "#000")};
`;

const Check = styled.input`
  display: flex;
  align-items: center;
  justify-content: center;
  appearance: none;
  width: 13px;
  height: 13px;
  margin-right: 3px;
  border: 1px solid #555;
  border-radius: 3px;
  background: #fff;

  &:checked {
    border-color: #005fb8;
    background: #005fb8;
  }

  &:checked::after {
    content: "";
    width: 7px;
    height: 4px;
    border: solid #fff;
    border-width: 0 0 1px 1px;
    transform: rotate(-45deg);
  }
`;

const Radio = styled.input`
  appearance: none;
  width: 13px;
  height: 13px;
  margin-right: 3px;
  border: 1px solid #666;
  border-radius: 50%;
  background: #fff;

  &:checked {
    border: 4px solid #005fb8;
  }

  &:disabled {
    border-color: #bfbfbf;
  }
`;

const CubeRow = styled.div`
  display: flex;
  gap: 2px;
  padding-left: 30px;
  margin-bottom: 5px;
`;

const CubeButton = styled(PlainButton)`
  width: 24px;
  height: 24px;
  border: 1px solid ${(p) => (p.$on ? "#666" : "#999")};
  background: ${(p) => (p.$on ? "#c2c2c2" : "#fafafa")};
`;

const ScaleBox = styled.div`
  display: flex;
  align-items: center;
  height: 21px;
  margin: 3px 14px 0 31px;
  padding: 2px 4px 2px 2px;
  border: 1px solid #c4c4c4;
  border-radius: 2px;
  background: #fff;

  select {
    appearance: none;
    flex: 1;
    height: 15px;
    margin-right: 7px;
    padding: 0 2px;
    border: 0;
    font-size: 12px;
    line-height: 15px;
    background: #d6dadf;
    color: #777;
    opacity: 1;
  }
`;

const MoreButton = styled.button`
  display: block;
  width: 97px;
  height: 21px;
  margin: 21px 0 0 45px;
  padding: 0;
  border: 1px solid #d0d0d0;
  border-radius: 3px;
  line-height: 18px;
  background: #fdfdfd;
`;

const Canvas = styled.div`
  position: relative;
  flex: 1;
  min-width: 0;
  background: #c3c7d3;
`;

const SheetSvg = styled.svg`
  width: 100%;
  height: 100%;

  text {
    font-family: "Liberation Serif", "Noto Sans CJK SC", serif;
    font-size: 16px;
    font-weight: 300;
    white-space: pre;
    fill: #222;
  }

  .zone {
    font-size: 14px;
  }
`;

const PanelHandle = styled(PlainButton)`
  position: absolute;
  top: 421px;
  left: -1px;
  width: 9px;
  height: 39px;
  border: 1px solid #808080;
  border-left: 0;
  background: #f7f7f7;
`;

const HeadsUp = styled.div`
  position: absolute;
  top: 6px;
  left: 0;
  right: 0;
  display: flex;
  align-items: center;
  justify-content: center;

  > svg {
    margin: 0 4px;
  }

  button {
    width: 26px;
    height: 18px;
  }
`;

const DocButtons = styled.div`
  position: absolute;
  top: 7px;
  right: 6px;
  display: flex;
  color: #8b8e96;

  button {
    width: 26px;
  }
`;

const RightRail = styled.div`
  flex: none;
  width: 17px;
  padding: 213px 0 45px 8px;
  border-bottom: 1px solid #c0c0c0;
`;

const RailThumb = styled.div`
  width: 2px;
  height: 100%;
  background: #8a8a8a;
`;

const TaskPane = styled.div`
  position: absolute;
  top: 51px;
  right: 0;
  border: 1px solid #808080;
  border-right: 0;
`;

const TaskButton = styled(PlainButton)`
  width: 26px;
  height: 23px;
  background: ${(p) => (p.$active ? "#f7f7f7" : "#d3d3d3")};

  & + & {
    height: 24px;
    border-top: 1px solid #808080;
  }
`;

const SheetBar = styled.div`
  display: flex;
  flex: none;
  height: 16px;
  border-bottom: 1px solid #808080;
`;

const NavButton = styled(PlainButton)`
  width: 16px;
  border: 1px solid #777;
  border-bottom: 0;
  background: #aaacaf;
`;

const SheetTab = styled(PlainButton)`
  gap: 2px;
  width: ${(p) => (p.$active ? 70 : 37)}px;
  padding-left: ${(p) => (p.$active ? 3 : 0)}px;
  border-right: 1px solid #808080;
  line-height: 14px;
  background: ${(p) => (p.$active ? "#f7f7f7" : "#d3d3d3")};
`;

const SheetFill = styled.div`
  flex: 780;
  border-top: 1px solid #808080;
  border-right: 1px solid #222;
`;

const HScroll = styled.div`
  display: flex;
  align-items: center;
  flex: 968;
  margin-left: 3px;
  padding-left: 4px;
  border-left: 1px solid #808080;
  background: #f0f0f0;
`;

const StatusBar = styled.footer`
  display: flex;
  align-items: center;
  flex: none;
  height: 19px;
  padding: 3px 2px 0;
  border-bottom: 1px solid #a9b2b5;
  font-size: 12px;
  line-height: 15px;
`;

const Hint = styled.div`
  flex: 1;
  white-space: nowrap;
`;

const Status = styled.div`
  display: flex;
  align-items: center;
  gap: 21px;
  width: ${(p) => p.$w}px;
  white-space: nowrap;
`;

const Taskbar = styled.div`
  flex: none;
  height: 3px;
  background: #cfe6ee;
`;

const Ime = styled.div`
  position: absolute;
  right: 12px;
  bottom: 64px;
  display: flex;
  align-items: center;
`;

const ImeLogo = styled.svg`
  z-index: 1;
`;

const ImeTools = styled.div`
  display: flex;
  align-items: center;
  gap: 8px;
  height: 26px;
  margin-left: -8px;
  padding: 0 4px 0 13px;
  border: 1px solid #b5cbe8;
  border-radius: 2px;
  background: #fff;

  svg {
    width: 16px;
    height: 16px;
  }
`;

const Watermark = styled.div`
  position: absolute;
  right: 5px;
  bottom: 10px;
  font-size: 37px;
  line-height: 50px;
  font-weight: 300;
  color: rgba(225, 226, 228, 0.75);
  text-shadow: 1px 1px 1px rgba(0, 0, 0, 0.4);
  pointer-events: none;
`;
